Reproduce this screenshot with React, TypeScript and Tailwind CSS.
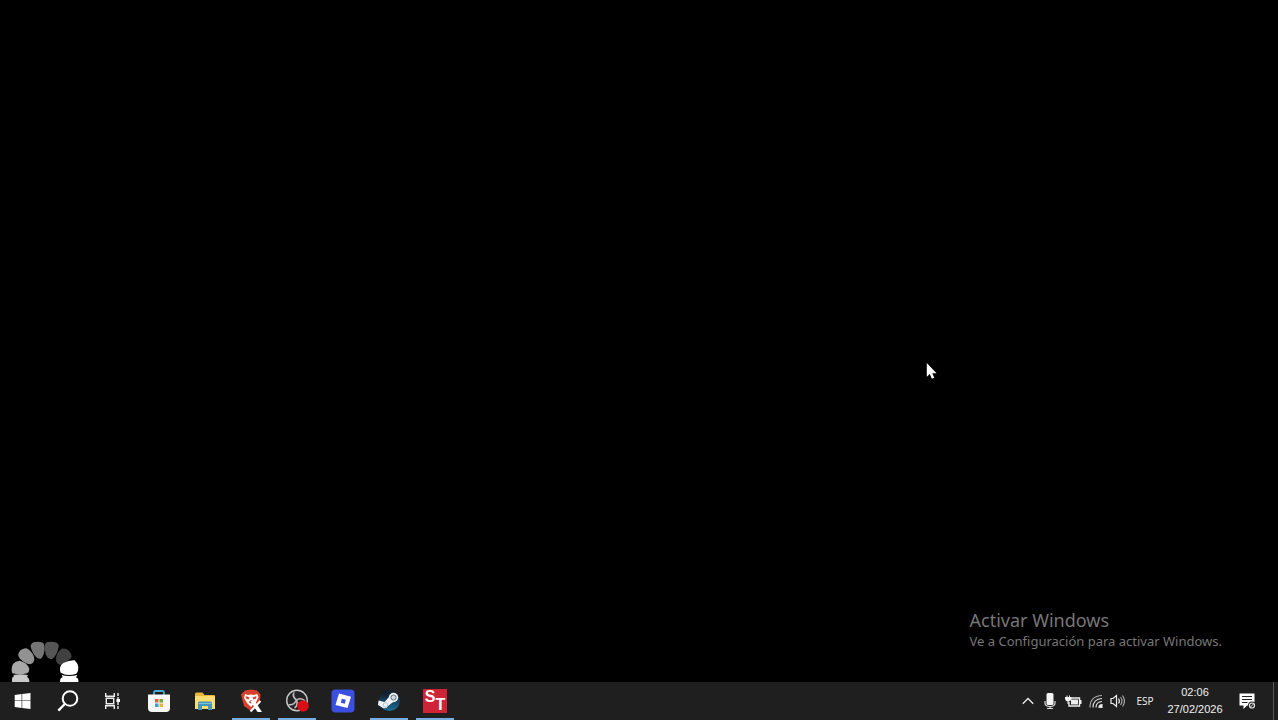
import type { ReactNode } from 'react';

interface AppButtonProps {
  label: string;
  running?: boolean;
  children: ReactNode;
}

const AppButton: React.FC<AppButtonProps> = ({ label, running, children }) => (
  <button
    type="button"
    aria-label={label}
    className={
      running
        ? 'flex w-[46px] items-center justify-center border-x-4 border-transparent hover:bg-[#333] shadow-[inset_0_-2px_0_#78aee0]'
        : 'flex w-[46px] items-center justify-center hover:bg-[#333]'
    }
  >
    {children}
  </button>
);

const Spinner = () => (
  <svg className="absolute bottom-0 left-[10px]" width="70" height="42" viewBox="30 30 210 126">
    <path d="M36 156v-10q0-5 6-7l-2-4q20-5 44 0l-3 6q8 4 7 15z" fill="#c9c9c9" />
    <path d="M37 130q-5-14 2-28 7-9 20-10 22 5 29 24 0 10-7 14-20 6-44 0z" fill="#a8a8a8" />
    <path d="M60 86q-7-6-5-13 2-12 14-16 8-4 15 0 20 14 19 34-3 10-12 12-18-3-31-17z" fill="#929292" />
    <path d="M94 57q-6-14 6-20 15-4 29 1 7 10 4 25-3 20-12 24-17-1-27-30z" fill="#757575" />
    <path d="M135 45q0-7 8-9 15-3 27 2 9 5 5 17-5 22-17 31-15 4-21-13-4-14-2-28z" fill="#555" />
    <path d="M168 92q-1-24 17-36 13-3 22 6 8 8 8 20-17 18-36 23-9-4-11-13z" fill="#404040" />
    <path d="M182 128q-7-19 8-29 18-9 34-8 10 10 11 20 1 13-6 20-27 10-47-3z" fill="#fff" />
    <path d="M180 156q0-13 8-14l-3-7q22 6 47 0l-4 7q9 4 7 14z" fill="#fff" />
  </svg>
);

const WindowsIcon = () => (
  <svg width="18" height="18" viewBox="0 0 18 18" fill="#fff">
    <path d="M.7 3 7.600 2v6.500H.7zM8.200 2 16.500 1v7.500H8.200zM.7 9.100h6.900V16l-6.900-1zM8.200 9.100h8.300V17l-8.300-1z" />
  </svg>
);

const SearchIcon = () => (
  <svg width="22" height="22" viewBox="0 0 22 22" fill="none" stroke="#fff" strokeWidth="2">
    <circle cx="13" cy="8.5" r="7.3" />
    <path d="M7.8 14 1.3 20.7" strokeWidth="2.4" />
  </svg>
);

const TaskViewIcon = () => (
  <svg width="18" height="18" viewBox="0 0 18 18" fill="none" stroke="#eee" strokeWidth="1.4">
    <path d="M1.700 1v3.300h8.600V1M1.700 17v-3.300h8.600V17M2.300 6.300h7.400v5.400H2.300zM14 1v3M14 5v8M14 14v3" />
    <path d="M12.500 7h3.500v3h-3.500z" fill="#fff" stroke="none" />
  </svg>
);

const StoreIcon = () => (
  <svg width="24" height="24" viewBox="0 0 24 24">
    <path d="M7 6V3.5Q7 2 8.500 2h7Q17 2 17 3.500V6" fill="none" stroke="#4da9cf" strokeWidth="1.8" />
    <path d="M1 5.500h22V19q0 4-4 4H5q-4 0-4-4z" fill="#f7f7f7" />
    <path d="M8 10h3.500v3.500H8z" fill="#e5603a" />
    <path d="M12.500 10H16v3.500h-3.500z" fill="#6dab35" />
    <path d="M8 14.500h3.500V18H8z" fill="#38a1dc" />
    <path d="M12.500 14.500H16V18h-3.500z" fill="#efb32c" />
  </svg>
);

const FolderIcon = () => (
  <svg width="22" height="20" viewBox="0 0 22 20">
    <path d="M1 3q0-1.500 1.500-1.500h6L10.500 4H20q1 0 1 1v13H1z" fill="#e5b83b" />
    <path d="M1 5h20v13H1z" fill="#fadc70" />
    <path d="M4 19v-7q0-1.500 1.500-1.500h11q1.500 0 1.500 1.500v7h-4v-4H8v4z" fill="#4696b8" />
    <path d="M4.500 12.500h13" stroke="#7fc4d6" />
  </svg>
);

const BraveIcon = () => (
  <svg width="24" height="24" viewBox="0 0 24 24">
    <path d="m6 1.500 6-1 6 1 3.500 4-1 9L12 22l-7-5L2 5.500z" fill="#d8402b" />
    <path d="m6 5 3 1 3-.5 3 .5 3-1 1.500 3-2 4.500-2.500 2L12 18l-4-4-3-5z" fill="#fff" />
    <path d="m6.500 7 4 1.500-1 2-2.500-1zM17.500 7l-4 1.500 1 2 2.500-1zM11 11h2l1 2.500-2 1-2-1z" fill="#d8402b" />
    <path d="M11 11.500h4.500L23 23h-4.500z" fill="#fff" />
    <path d="m11.500 22.500 10-10.500" stroke="#fff" strokeWidth="2" />
  </svg>
);

const ObsIcon = () => (
  <svg width="24" height="24" viewBox="0 0 24 24">
    <circle cx="12" cy="11.500" r="10.300" fill="#242426" stroke="#c9c9c9" strokeWidth="1.400" />
    <g fill="none" stroke="#bcbcbc" strokeWidth="1.600">
      <path d="M9 3.500q-2 4 2.500 7.500" />
      <path d="M3.500 15.500q5 1.500 8-4.500" />
      <path d="M11.500 11q5-3 8.500 1" />
      <path d="M11.500 11q2 5-2 8" />
    </g>
    <circle cx="18" cy="17" r="5.800" fill="#db0d16" />
  </svg>
);

const RobloxIcon = () => (
  <svg width="24" height="24" viewBox="0 0 24 24">
    <rect x=".5" y=".5" width="23" height="23" rx="4" fill="#3c50e0" />
    <path d="m8 4.500 12 3.200L16.500 19 4.500 16z" fill="#fff" />
    <path d="m10.800 9.700 4 1-1 4-4-1z" fill="#3c50e0" />
  </svg>
);

const SteamIcon = () => (
  <svg width="24" height="24" viewBox="0 0 24 24">
    <defs>
      <linearGradient id="steam" x1="0" y1="0" x2="0" y2="1">
        <stop offset=".2" stopColor="#132030" />
        <stop offset="1" stopColor="#1d7199" />
      </linearGradient>
    </defs>
    <circle cx="12.500" cy="11.500" r="10.500" fill="url(#steam)" />
    <path d="m1.500 11.500 6 1.500 5-5.500 5 4.500-6.500 5q-1.500 3-5 2L1 16z" fill="#eef2f5" />
    <circle cx="16.500" cy="8.500" r="4.700" fill="#f1f4f6" />
    <circle cx="16.500" cy="8.500" r="2.600" fill="#d3dbe0" stroke="#4b6375" strokeWidth=".9" />
    <circle cx="8.500" cy="16" r="2.300" fill="#f1f4f6" stroke="#9fb0bb" strokeWidth=".7" />
  </svg>
);

const ChevronIcon = () => (
  <svg width="12" height="8" viewBox="0 0 12 8" fill="none" stroke="#eee" strokeWidth="1.300">
    <path d="M.8 6.700 6 1.500l5.200 5.200" />
  </svg>
);

const MicIcon = () => (
  <svg width="14" height="18" viewBox="0 0 14 18">
    <rect x="3.500" y="1" width="7" height="12" rx="1.500" fill="#f5f5f5" />
    <path d="M2 9v2q0 3.500 5 3.500t5-3.500V9M7 14v3M4 16.500h6" fill="none" stroke="#ddd" strokeWidth="1.200" />
  </svg>
);

const BatteryIcon = () => (
  <svg width="18" height="14" viewBox="0 0 18 14">
    <path d="M6 4h9.500v8H5V8" fill="none" stroke="#eee" strokeWidth="1.400" />
    <path d="M7 5.500h7v5H7zM16 6h1.500v4H16z" fill="#eee" />
    <path d="M1 3h1.500V1.500h1V3H5V1.500h1V3h1.500v2Q7 7 4.500 7.500V10H3.500V7.500Q1.500 7 1 5z" fill="#f3f3f3" />
  </svg>
);

const WifiIcon = () => (
  <svg width="14" height="14" viewBox="0 0 14 14" fill="none" stroke="#ddd" strokeWidth="1.200">
    <path d="M1 13.500Q1 2 13 1.500" stroke="#aaa" />
    <path d="M4 13.500q0-8.500 9-9M7 13.500q0-5.500 6-6" />
    <path d="M10 13.500q0-3 3-3v3z" fill="#fff" />
  </svg>
);

const VolumeIcon = () => (
  <svg width="16" height="14" viewBox="0 0 16 14" fill="none" stroke="#eee" strokeWidth="1.200">
    <path d="M1 4.500h2L6.500 1.500v11L3 9.500H1z" />
    <path d="M8.500 4.500q1.800 2.500 0 5" />
    <path d="M10.500 3q3 4 0 8M12.500 1.500q4 5.500 0 11" stroke="#aaa" />
  </svg>
);

const NotificationIcon = () => (
  <svg width="18" height="18" viewBox="0 0 18 18">
    <path d="M1.500 1.500h15v12H9L5.500 17v-3.500h-4z" fill="#fff" />
    <path d="M4 4.500h10M4 7.500h10M4 10.500h5.500" stroke="#222" strokeWidth="1.200" />
    <circle cx="14" cy="13.500" r="4" fill="#1f1f1f" />
    <circle cx="14" cy="13.500" r="2.500" fill="none" stroke="#e5e5e5" strokeWidth="1.200" />
    <path d="m12 15.500 4-4" stroke="#ddd" />
  </svg>
);

const Cursor = () => (
  <svg className="absolute left-[926px] top-[362px]" width="12" height="18" viewBox="0 0 12 18">
    <path d="M.8 1v13.700l3-2.800 2.100 4.900 2.400-1-2.100-4.600h4.300z" fill="#fff" />
  </svg>
);

export default function App() {
  return (
    <div className="flex h-screen flex-col overflow-hidden bg-black font-['Open_Sans','Noto_Sans',sans-serif]">
      <main className="relative flex-1">
        <div className="absolute bottom-[31px] right-[52px] pr-1 font-['Noto_Sans',sans-serif] text-[#777]">
          <p className="text-[18px] leading-[22px]">Activar Windows</p>
          <p className="text-[13px] leading-[20px]">Ve a Configuración para activar Windows.</p>
        </div>
        <Spinner />
        <Cursor />
      </main>

      <footer className="flex h-[38px] shrink-0 items-stretch bg-[#1f1f1f] text-[#f2f2f2]">
        <button type="button" aria-label="Inicio" className="flex w-[45px] items-center justify-center">
          <WindowsIcon />
        </button>
        <button type="button" aria-label="Buscar" className="flex w-[45px] items-center justify-center">
          <SearchIcon />
        </button>
        <AppButton label="Vista de tareas"><TaskViewIcon /></AppButton>
        <AppButton label="Microsoft Store"><StoreIcon /></AppButton>
        <AppButton label="Explorador de archivos"><FolderIcon /></AppButton>
        <AppButton label="Brave" running><BraveIcon /></AppButton>
        <AppButton label="OBS Studio" running><ObsIcon /></AppButton>
        <AppButton label="Roblox"><RobloxIcon /></AppButton>
        <AppButton label="Steam" running><SteamIcon /></AppButton>
        <AppButton label="ST" running>
          <span className="flex size-6 justify-center bg-[#cf2438] font-['Liberation_Sans',sans-serif] text-[16px] font-bold leading-[16px] text-white">
            <span>S</span>
            <span className="pt-2">T</span>
          </span>
        </AppButton>

        <div className="ml-auto flex items-stretch text-[11px] leading-[17px]">
          <button type="button" aria-label="Mostrar iconos ocultos" className="flex w-[22px] items-center justify-center">
            <ChevronIcon />
          </button>
          <button type="button" aria-label="Micrófono" className="flex w-[22px] items-center justify-center">
            <MicIcon />
          </button>
          <button type="button" aria-label="Batería" className="flex w-6 items-center justify-center">
            <BatteryIcon />
          </button>
          <button type="button" aria-label="Red" className="flex w-[22px] items-center justify-center">
            <WifiIcon />
          </button>
          <button type="button" aria-label="Volumen" className="flex w-[22px] items-center justify-center">
            <VolumeIcon />
          </button>
          <button type="button" className="w-8 text-center text-[10px]">ESP</button>
          <button type="button" className="w-[68px] text-center font-['Liberation_Sans',sans-serif]">
            <span className="block">02:06</span>
            <span className="block">27/02/2026</span>
          </button>
          <button type="button" aria-label="Notificaciones" className="flex w-9 items-center justify-center">
            <NotificationIcon />
          </button>
          <button type="button" aria-label="Mostrar escritorio" className="ml-2 w-[5px] border-l border-[#555]" />
        </div>
      </footer>
    </div>
  );
}
